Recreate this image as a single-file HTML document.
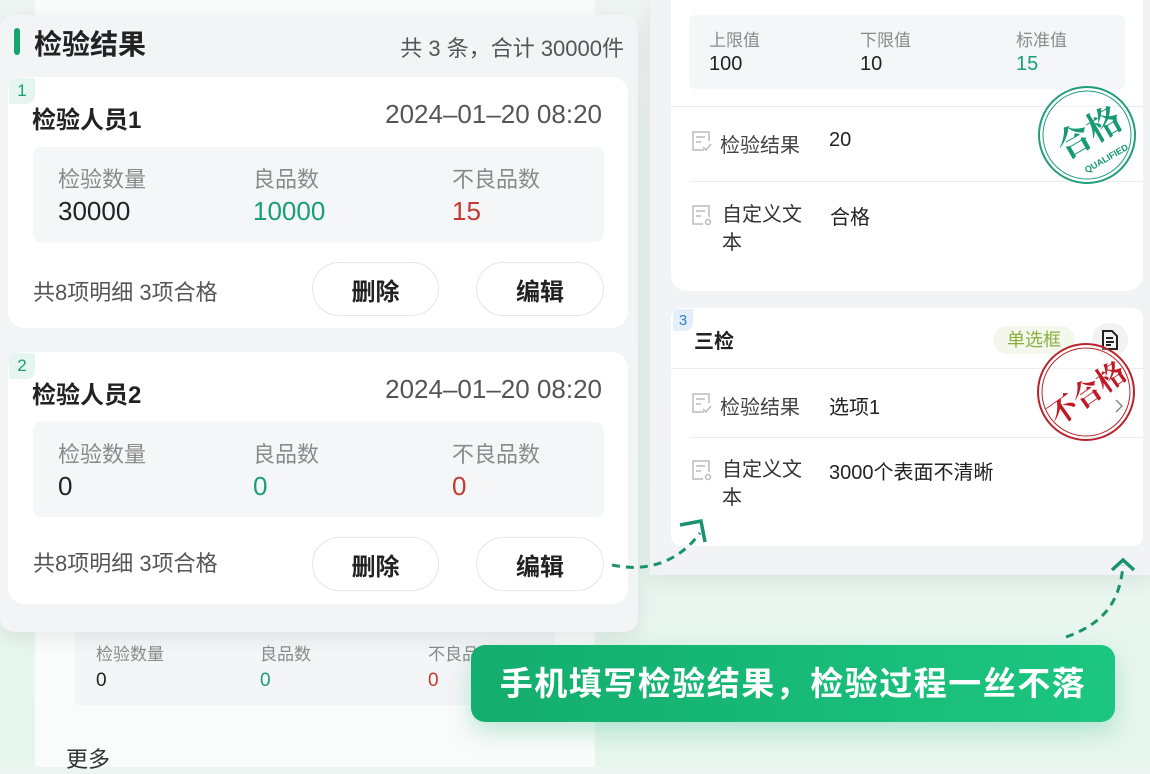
<!DOCTYPE html>
<html><head><meta charset="utf-8">
<style>
*{margin:0;padding:0;box-sizing:border-box}
body{width:1150px;height:767px;overflow:hidden;position:relative;background:linear-gradient(180deg,#eef4f2 0%,#e9f5ef 60%,#e6f6ee 100%);font-family:"Liberation Sans","Noto Sans CJK SC",sans-serif;color:#222}
.a{position:absolute;white-space:nowrap}
.card{position:absolute;background:#fff;border-radius:16px}
.lbl{color:#8a8a8a;font-size:22px}
.btn{position:absolute;border:1.5px solid #e6e6e6;border-radius:28px;background:#fff;font-size:24px;font-weight:bold;display:flex;align-items:center;justify-content:center;color:#222}
.badge{position:absolute;width:26px;height:26px;border-radius:6px 0 8px 0;font-size:17px;display:flex;align-items:center;justify-content:center}
.ic{position:absolute}
</style></head><body>

<div class="a" style="left:35px;top:0;width:560px;height:767px;background:#fafbfb"></div>
<div class="a" style="left:75px;top:632px;width:480px;height:73px;background:#f4f5f6"></div>
<div class="a lbl" style="left:96px;top:640px;font-size:17px">检验数量</div>
<div class="a lbl" style="left:260px;top:640px;font-size:17px">良品数</div>
<div class="a lbl" style="left:428px;top:640px;font-size:17px">不良品数</div>
<div class="a" style="left:96px;top:670px;font-size:19px">0</div>
<div class="a" style="left:260px;top:670px;font-size:19px;color:#1a9d7c">0</div>
<div class="a" style="left:428px;top:670px;font-size:19px;color:#c23a33">0</div>
<div class="a" style="left:66px;top:742px;font-size:22px;color:#333">更多</div>

<div class="a" style="left:0;top:15px;width:638px;height:617px;background:#f3f4f6;border-radius:14px;box-shadow:0 6px 20px rgba(0,0,0,.08)"></div>
<div class="a" style="left:14px;top:28px;width:6px;height:27px;background:#16a56e;border-radius:3px"></div>
<div class="a" style="left:34px;top:23px;font-size:28px;font-weight:bold;color:#222">检验结果</div>
<div class="a" style="right:526px;top:31px;font-size:22px;color:#555">共 3 条，合计 30000件</div>

<div class="card" style="left:8px;top:77px;width:620px;height:251px"></div>
<div class="badge" style="left:9px;top:78px;background:#e5f5ef;color:#1a9d7c">1</div>
<div class="a" style="left:32px;top:100px;font-size:24px;font-weight:bold">检验人员1</div>
<div class="a" style="right:548px;top:99px;font-size:26px;color:#555">2024–01–20 08:20</div>
<div class="a" style="left:33px;top:147px;width:571px;height:95px;background:#f5f6f7;border-radius:8px"></div>
<div class="a lbl" style="left:58px;top:162px">检验数量</div>
<div class="a lbl" style="left:253px;top:162px">良品数</div>
<div class="a lbl" style="left:452px;top:162px">不良品数</div>
<div class="a" style="left:58px;top:196px;font-size:26px">30000</div>
<div class="a" style="left:253px;top:196px;font-size:26px;color:#1a9d7c">10000</div>
<div class="a" style="left:452px;top:196px;font-size:26px;color:#c23a33">15</div>
<div class="a" style="left:33px;top:275px;font-size:22px;color:#555">共8项明细 3项合格</div>
<div class="btn" style="left:312px;top:262px;width:127px;height:54px">删除</div>
<div class="btn" style="left:476px;top:262px;width:128px;height:54px">编辑</div>

<div class="card" style="left:8px;top:352px;width:620px;height:252px"></div>
<div class="badge" style="left:9px;top:353px;background:#e5f5ef;color:#1a9d7c">2</div>
<div class="a" style="left:32px;top:375px;font-size:24px;font-weight:bold">检验人员2</div>
<div class="a" style="right:548px;top:374px;font-size:26px;color:#555">2024–01–20 08:20</div>
<div class="a" style="left:33px;top:422px;width:571px;height:95px;background:#f5f6f7;border-radius:8px"></div>
<div class="a lbl" style="left:58px;top:437px">检验数量</div>
<div class="a lbl" style="left:253px;top:437px">良品数</div>
<div class="a lbl" style="left:452px;top:437px">不良品数</div>
<div class="a" style="left:58px;top:471px;font-size:26px">0</div>
<div class="a" style="left:253px;top:471px;font-size:26px;color:#1a9d7c">0</div>
<div class="a" style="left:452px;top:471px;font-size:26px;color:#c23a33">0</div>
<div class="a" style="left:33px;top:546px;font-size:22px;color:#555">共8项明细 3项合格</div>
<div class="btn" style="left:312px;top:537px;width:127px;height:54px">删除</div>
<div class="btn" style="left:476px;top:537px;width:128px;height:54px">编辑</div>

<div class="a" style="left:650px;top:0;width:500px;height:575px;background:#f2f3f5;box-shadow:0 6px 18px rgba(0,0,0,.07)"></div>
<div class="card" style="left:671px;top:-16px;width:472px;height:307px"></div>
<div class="a" style="left:689px;top:15px;width:436px;height:74px;background:#f5f6f7;border-radius:6px"></div>
<div class="a" style="left:709px;top:26px;font-size:17px;color:#8a8a8a">上限值</div>
<div class="a" style="left:860px;top:26px;font-size:17px;color:#8a8a8a">下限值</div>
<div class="a" style="left:1016px;top:26px;font-size:17px;color:#8a8a8a">标准值</div>
<div class="a" style="left:709px;top:53px;font-size:20px">100</div>
<div class="a" style="left:860px;top:53px;font-size:20px">10</div>
<div class="a" style="left:1016px;top:53px;font-size:20px;color:#1a9d7c">15</div>
<div class="a" style="left:671px;top:106px;width:472px;height:1px;background:#ececec"></div>
<div class="a" style="left:690px;top:181px;width:453px;height:1px;background:#ececec"></div>
<svg class="ic" style="left:691px;top:130px" width="22" height="22" viewBox="0 0 22 22"><path d="M13 20H2V2h16v9 M5 7h9 M5 12h5 M12 17l3 3 5-6" fill="none" stroke="#bbb" stroke-width="1.5"/></svg>
<div class="a" style="left:720px;top:129px;font-size:20px;color:#444">检验结果</div>
<div class="a" style="left:829px;top:129px;font-size:20px">20</div>
<svg class="ic" style="left:691px;top:204px" width="22" height="22" viewBox="0 0 22 22"><path d="M12 20H2V2h16v11 M5 7h9 M5 12h5" fill="none" stroke="#bbb" stroke-width="1.5"/><circle cx="17" cy="18" r="2.5" fill="none" stroke="#bbb" stroke-width="1.5"/></svg>
<div class="a" style="left:722px;top:201px;font-size:20px;color:#333;line-height:28px;white-space:normal;width:88px">自定义文本</div>
<div class="a" style="left:830px;top:201px;font-size:20px">合格</div>

<div class="card" style="left:671px;top:308px;width:472px;height:238px;border-radius:10px"></div>
<div class="badge" style="left:673px;top:309px;width:20px;height:22px;background:#e3effa;color:#3a7fc0;font-size:15px">3</div>
<div class="a" style="left:694px;top:325px;font-size:20px;font-weight:bold">三检</div>
<div class="a" style="left:993px;top:326px;width:82px;height:28px;border-radius:14px;background:#f3f7ec;color:#8ab040;font-size:18px;text-align:center;line-height:28px">单选框</div>
<div class="a" style="left:1092px;top:323px;width:36px;height:34px;border-radius:17px;background:#f2f2f2"></div>
<svg class="a" style="left:1100px;top:329px" width="20" height="22" viewBox="0 0 20 22"><path d="M3 2h9l5 5v13H3z M6 9h7 M6 13h8 M6 16h5" fill="none" stroke="#222" stroke-width="2"/></svg>
<div class="a" style="left:671px;top:368px;width:472px;height:1px;background:#ececec"></div>
<div class="a" style="left:690px;top:437px;width:453px;height:1px;background:#ececec"></div>
<svg class="ic" style="left:691px;top:392px" width="22" height="22" viewBox="0 0 22 22"><path d="M13 20H2V2h16v9 M5 7h9 M5 12h5 M12 17l3 3 5-6" fill="none" stroke="#bbb" stroke-width="1.5"/></svg>
<div class="a" style="left:720px;top:391px;font-size:20px;color:#444">检验结果</div>
<div class="a" style="left:829px;top:391px;font-size:20px">选项1</div>
<svg class="ic" style="left:691px;top:459px" width="22" height="22" viewBox="0 0 22 22"><path d="M12 20H2V2h16v11 M5 7h9 M5 12h5" fill="none" stroke="#bbb" stroke-width="1.5"/><circle cx="17" cy="18" r="2.5" fill="none" stroke="#bbb" stroke-width="1.5"/></svg>
<div class="a" style="left:722px;top:456px;font-size:20px;color:#333;line-height:28px;white-space:normal;width:88px">自定义文本</div>
<div class="a" style="left:829px;top:456px;font-size:20px">3000个表面不清晰</div>

<svg class="a" style="left:1036px;top:84px" width="102" height="102" viewBox="0 0 102 102">
<circle cx="51" cy="51" r="48" fill="rgba(255,255,255,.4)" stroke="#1f9e7a" stroke-width="2"/>
<circle cx="51" cy="51" r="44" fill="none" stroke="#1f9e7a" stroke-width="1"/>
<text x="54" y="62" font-size="34" font-weight="bold" fill="#179a72" text-anchor="middle" transform="rotate(-30 51 51)" font-family="Noto Serif CJK SC,serif">合格</text>
<text x="56" y="84" font-size="9" font-weight="bold" fill="#179a72" text-anchor="middle" transform="rotate(-30 51 51)">QUALIFIED</text>
</svg>
<svg class="a" style="left:1035px;top:342px" width="102" height="102" viewBox="0 0 102 102">
<circle cx="51" cy="50" r="48" fill="rgba(255,255,255,.3)" stroke="#b8232b" stroke-width="2"/>
<circle cx="51" cy="50" r="44" fill="none" stroke="#b8232b" stroke-width="1"/>
<text x="51" y="62" font-size="29" font-weight="bold" fill="#c01a25" text-anchor="middle" transform="rotate(-35 51 50)" font-family="Noto Serif CJK SC,serif">不合格</text>
<path d="M81 58l6 6-6 6" fill="none" stroke="#888" stroke-width="1.5"/>
</svg>

<svg class="a" style="left:600px;top:505px" width="550" height="150" viewBox="0 0 550 150">
<path d="M12 60 C50 68 80 55 100 28" fill="none" stroke="#1a9270" stroke-width="3" stroke-dasharray="8 6"/>
<path d="M80 20L101 16L105 37" fill="none" stroke="#1a9270" stroke-width="3.5"/>
<path d="M466 132 C500 120 520 100 523 60" fill="none" stroke="#1a9270" stroke-width="3" stroke-dasharray="8 6"/>
<path d="M512 65L523 55L534 65" fill="none" stroke="#1a9270" stroke-width="3.5"/>
</svg>

<div class="a" style="left:471px;top:645px;width:644px;height:77px;border-radius:14px;background:linear-gradient(90deg,#13ad6d,#1cc681);box-shadow:0 10px 24px rgba(20,170,110,.25);color:#fff;font-size:33px;font-weight:bold;text-align:center;line-height:77px;letter-spacing:1.5px">手机填写检验结果，检验过程一丝不落</div>
</body></html>
